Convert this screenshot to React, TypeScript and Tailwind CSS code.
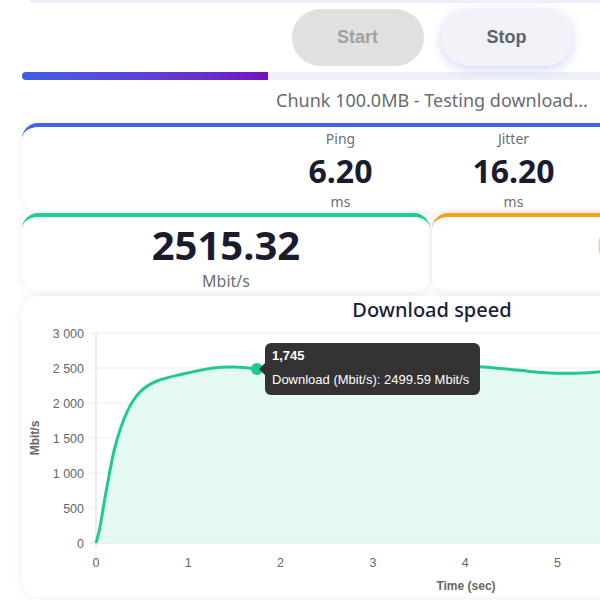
const points: [number, number][] = [
  [96, 543], [100, 527], [106, 492], [115, 447], [127, 412], [140, 392],
  [157, 381], [183, 374], [213, 368], [235, 367], [257, 369], [283, 372],
  [317, 372], [350, 369], [400, 365], [450, 365], [483, 367], [517, 370],
  [550, 373], [583, 373], [610, 371], [650, 369], [700, 368], [750, 370],
  [800, 369], [836, 368],
];

function smoothPath(pts: [number, number][]) {
  let d = `M${pts[0][0]},${pts[0][1]}`;
  for (let i = 0; i < pts.length - 1; i++) {
    const p0 = pts[i - 1] || pts[i];
    const p1 = pts[i];
    const p2 = pts[i + 1];
    const p3 = pts[i + 2] || p2;
    const c1x = p1[0] + (p2[0] - p0[0]) / 6;
    const c1y = p1[1] + (p2[1] - p0[1]) / 6;
    const c2x = p2[0] - (p3[0] - p1[0]) / 6;
    const c2y = p2[1] - (p3[1] - p1[1]) / 6;
    d += ` C${c1x},${c1y} ${c2x},${c2y} ${p2[0]},${p2[1]}`;
  }
  return d;
}

const yTicks = [
  { label: "3 000", y: 333 },
  { label: "2 500", y: 368 },
  { label: "2 000", y: 403 },
  { label: "1 500", y: 438 },
  { label: "1 000", y: 473 },
  { label: "500", y: 508 },
  { label: "0", y: 543 },
];

const xTicks = [0, 1, 2, 3, 4, 5, 6, 7, 8];

function SpeedChart() {
  const line = smoothPath(points);
  const area = `${line} L836,543 L96,543 Z`;

  return (
    <svg
      width={820}
      height={272}
      viewBox="22 324 820 272"
      className="block"
      style={{ fontFamily: '"Liberation Sans", Arial, sans-serif' }}
    >
      {/* grid */}
      {yTicks.map((t) => (
        <line
          key={t.label}
          x1={90}
          x2={836}
          y1={t.y}
          y2={t.y}
          stroke={t.y === 543 ? "#dcdcdc" : "#ececec"}
          strokeWidth={1}
        />
      ))}
      <line x1={96} x2={96} y1={333} y2={549} stroke="#dcdcdc" strokeWidth={1} />

      {/* y labels */}
      {yTicks.map((t) => (
        <text
          key={t.label}
          x={84}
          y={t.y + 4.5}
          textAnchor="end"
          fontSize={12.5}
          fill="#666"
        >
          {t.label}
        </text>
      ))}

      {/* x labels */}
      {xTicks.map((n) => (
        <text
          key={n}
          x={96 + n * 92.3}
          y={567}
          textAnchor="middle"
          fontSize={12.5}
          fill="#666"
        >
          {n}
        </text>
      ))}

      <text x={466} y={590} textAnchor="middle" fontSize={12} fontWeight={700} fill="#666">
        Time (sec)
      </text>
      <text
        x={0}
        y={0}
        transform="translate(39 438) rotate(-90)"
        textAnchor="middle"
        fontSize={12}
        fontWeight={700}
        fill="#666"
      >
        Mbit/s
      </text>

      {/* data */}
      <path d={area} fill="#e3f9f2" />
      <path d={line} fill="none" stroke="#1ec995" strokeWidth={3} strokeLinejoin="round" />
      <circle cx={257} cy={369} r={6} fill="#1ec995" />
    </svg>
  );
}

export default function App() {
  return (
    <div className="w-[600px] h-[600px] overflow-hidden bg-white relative">
      <div className="w-[864px] px-[22px]">
        {/* bottom of previous card */}
        <div className="ml-[8px] h-[3px] rounded-b-xl bg-[#eceffb]" />

        {/* buttons */}
        <div className="mt-[6px] flex justify-center gap-[17px] font-['Liberation_Sans',Arial,sans-serif] text-[18px] font-bold">
          <button
            type="button"
            className="w-[132px] h-[57px] rounded-full bg-[#e0e0e0] text-[#a0a0a0]"
          >
            Start
          </button>
          <button
            type="button"
            className="w-[132px] h-[57px] rounded-full bg-[#f1f3f8] text-[#5b636e] shadow-[0_3px_12px_rgba(90,110,240,0.28)]"
          >
            Stop
          </button>
        </div>

        {/* progress */}
        <div className="mt-[6px] h-2 rounded-full bg-[#edf1f6] overflow-hidden">
          <div className="h-full w-[246px] bg-gradient-to-r from-[#3f5ee8] to-[#7010c0]" />
        </div>

        <p className="mt-[7px] text-center text-[18px] leading-[26px] text-[#686c72] font-['Noto_Sans',sans-serif]">
          Chunk 100.0MB - Testing download...
        </p>

        {/* ping / jitter */}
        <div className="mt-[10px] h-[88px] rounded-2xl border-t-[4px] border-[#4360e6] bg-white shadow-[0_0_10px_rgba(0,0,0,0.07)] font-['Noto_Sans',sans-serif]">
          <div className="flex pl-[232px] pt-[2px]">
            {[
              { label: "Ping", value: "6.20" },
              { label: "Jitter", value: "16.20" },
            ].map((m) => (
              <div key={m.label} className="w-[173px] flex flex-col items-center">
                <span className="text-[14px] leading-[20px] text-[#6b6f75]">{m.label}</span>
                <span className="mt-[4px] text-[32px] leading-[36px] font-bold text-[#1b1b2f]">
                  {m.value}
                </span>
                <span className="mt-[3px] text-[14px] leading-[20px] text-[#6b6f75]">ms</span>
              </div>
            ))}
          </div>
        </div>

        {/* download / upload */}
        <div className="mt-[2px] flex gap-[2px] font-['Noto_Sans',sans-serif]">
          <div className="w-[408px] h-[79px] rounded-2xl border-t-[4px] border-[#1fcf9b] bg-white shadow-[0_0_10px_rgba(0,0,0,0.07)] flex flex-col items-center pt-[6px]">
            <span className="text-[40px] leading-[44px] font-bold text-[#1b1b2f]">2515.32</span>
            <span className="mt-[3px] text-[16px] leading-[22px] text-[#6b6f75]">Mbit/s</span>
          </div>
          <div className="flex-1 h-[79px] rounded-2xl border-t-[4px] border-[#f7a21b] bg-white shadow-[0_0_10px_rgba(0,0,0,0.07)] flex flex-col items-center pt-[6px]">
            <span className="text-[40px] leading-[44px] font-bold text-[#d0d0d0]">0.00</span>
          </div>
        </div>

        {/* chart */}
        <div className="relative mt-[4px] h-[301px] rounded-2xl bg-white shadow-[0_0_12px_rgba(0,0,0,0.07)]">
          <h2 className="text-center text-[20px] leading-[28px] font-medium text-[#1a1d3a] font-['Noto_Sans',sans-serif]">
            Download speed
          </h2>
          <SpeedChart />

          {/* tooltip */}
          <div className="absolute left-[243px] top-[47px] w-[215px] h-[52px] rounded-md bg-[#333333] pl-[7px] pt-[5px] text-white text-[13px] leading-[16px] font-['Liberation_Sans',Arial,sans-serif]">
            <div className="absolute left-[-6px] top-[20px] w-0 h-0 border-y-[6px] border-y-transparent border-r-[6px] border-r-[#333333]" />
            <div className="font-bold">1,745</div>
            <div className="mt-[8px]">Download (Mbit/s): 2499.59 Mbit/s</div>
          </div>
        </div>
      </div>
    </div>
  );
}
